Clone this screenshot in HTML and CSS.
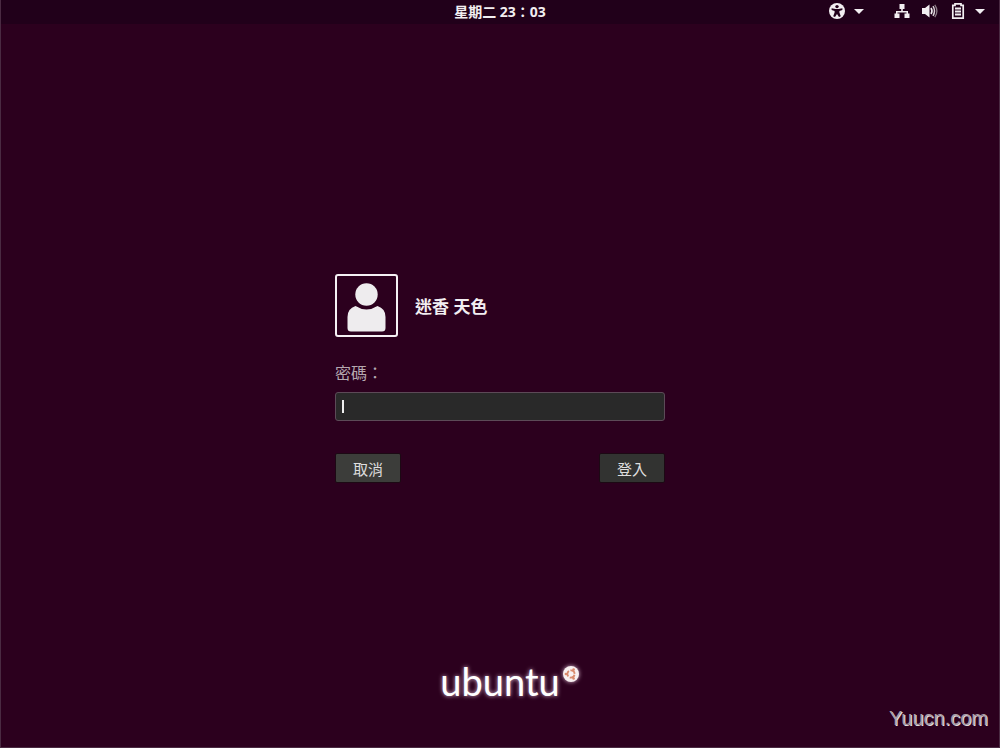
FILE: index.html
```html
<!DOCTYPE html>
<html lang="zh-Hant">
<head>
<meta charset="UTF-8">
<meta name="viewport" content="width=device-width, initial-scale=1.0">
<title>登入</title>
<link rel="stylesheet" href="styles.css">
</head>
<body>
<header class="topbar">
<time class="clock">星期二 23：03</time>
<div class="status">
<button class="menu" aria-label="無障礙">
<svg width="16" height="16" viewBox="0 0 16 16">
<circle cx="8" cy="8" r="8" fill="#f2eef1"/>
<circle cx="8" cy="3.6" r="1.7" fill="#21001a"/>
<path d="M2.6 5.2L6.4 6H9.6L13.4 5.2V7L10.4 8V9.6L11.8 13.2L10 14L8 11L6 14L4.2 13.2L5.6 9.6V8L2.6 7Z" fill="#21001a"/>
</svg>
<svg class="arrow" width="10" height="5" viewBox="0 0 10 5"><path d="M0 0H10L5 5Z"/></svg>
</button>
<button class="menu" aria-label="系統">
<svg width="16" height="16" viewBox="0 0 16 16" fill="#f2eef1">
<path d="M5.5 1H10.5V6H8.8V8H14V10.5H15.5V15H10.5V10.5H12.5V9.5H3.5V10.5H5.5V15H.5V10.5H2V8H7.2V6H5.5Z"/>
</svg>
<svg width="16" height="16" viewBox="0 0 16 16">
<path d="M0 5H3L7.5 1.5V14.5L3 11H0Z" fill="#f2eef1"/>
<path d="M9 5Q11 8 9 11" fill="none" stroke="#f2eef1" stroke-width="1.6"/>
<path d="M11 3.2Q14 8 11 12.8" fill="none" stroke="#d8cfd5" stroke-width="1.5"/>
<path d="M12.8 1.8Q17 8 12.8 14.2" fill="none" stroke="#8d7d88" stroke-width="1.3"/>
</svg>
<svg width="16" height="16" viewBox="0 0 16 16">
<path d="M5 2.3V.8H11V2.3H13.2V15.2H2.8V2.3Z" fill="none" stroke="#f2eef1" stroke-width="1.7"/>
<path d="M5 5.5H11M5 8.5H11M5 11.5H11" stroke="#f2eef1" stroke-width="1.8"/>
</svg>
<svg class="arrow" width="10" height="5" viewBox="0 0 10 5"><path d="M0 0H10L5 5Z"/></svg>
</button>
</div>
</header>

<main>
<form class="login" onsubmit="return false">
<div class="user">
<svg class="avatar" width="63" height="63" viewBox="0 0 63 63">
<rect x="1" y="1" width="61" height="61" rx="2" fill="none" stroke="#f5f0f4" stroke-width="2"/>
<circle cx="31.5" cy="20.5" r="11.2" fill="#eeecee"/>
<path d="M20.5 32Q31.5 39 42.5 32Q50.5 34.5 50.5 43V54Q50.5 57.5 47 57.5H16Q12.5 57.5 12.5 54V43Q12.5 34.5 20.5 32Z" fill="#eeecee"/>
</svg>
<span class="name">迷香 天色</span>
</div>
<label for="password">密碼：</label>
<div class="field">
<input type="password" id="password">
<span class="caret"></span>
</div>
<div class="buttons">
<button type="button" class="cancel">取消</button>
<button type="submit">登入</button>
</div>
</form>
</main>

<footer>
<div class="logo">
<span>ubuntu</span>
<svg width="18" height="18" viewBox="0 0 18 18">
<circle cx="9" cy="9" r="8" fill="#f8f0f0"/>
<circle cx="9" cy="9" r="3.6" fill="none" stroke="#d98a6c" stroke-width="1.8" stroke-dasharray="6 1.54" stroke-dashoffset="-.8"/>
<circle cx="3.9" cy="9" r="1.3" fill="#d98a6c"/>
<circle cx="11.6" cy="4.5" r="1.3" fill="#d98a6c"/>
<circle cx="11.6" cy="13.5" r="1.3" fill="#d98a6c"/>
</svg>
</div>
<span class="site">Yuucn.com</span>
</footer>
</body>
</html>
```
FILE: styles.css
```css
* {
box-sizing: border-box;
}

body {
margin: 0;
min-height: 100vh;
display: flex;
flex-direction: column;
background: #2c001e;
border: 1px solid #4a2a42;
border-top: none;
color: #f2eef1;
font-family: "Noto Sans", "Noto Sans CJK TC", sans-serif;
}

button {
font-family: inherit;
color: inherit;
cursor: pointer;
}

.topbar {
display: grid;
grid-template-columns: 1fr auto 1fr;
align-items: center;
height: 24px;
padding-right: 14px;
background: #21001a;
}

.clock {
grid-column: 2;
padding-left: 14px;
font-size: 14px;
line-height: 24px;
font-weight: bold;
}

.status {
display: flex;
justify-content: flex-end;
gap: 30px;
padding-bottom: 2px;
}

.menu {
display: flex;
align-items: center;
gap: 12px;
padding: 0;
border: none;
background: none;
}

.arrow {
margin-left: -3px;
fill: #f2eef1;
}

main {
flex: 1;
display: flex;
justify-content: center;
align-items: center;
padding: 80px 16px 0;
}

.login {
width: 330px;
}

.user {
display: flex;
align-items: center;
gap: 17px;
}

.name {
font-size: 17px;
font-weight: bold;
}

label {
display: block;
margin-top: 24px;
font-size: 16px;
line-height: 24px;
color: #b5a8b0;
}

.field {
position: relative;
margin-top: 7px;
}

input {
display: block;
width: 100%;
height: 29px;
padding: 0 6px;
background: #292929;
border: 1px solid #5c4a57;
border-radius: 3px;
color: #fff;
font-size: 15px;
outline: none;
}

.caret {
position: absolute;
left: 7px;
top: 8px;
width: 2px;
height: 13px;
background: #eee;
}

.buttons {
display: flex;
justify-content: space-between;
margin-top: 32px;
}

.buttons button {
width: 66px;
height: 30px;
padding: 0;
background: #323331;
border: 1px solid #1c0914;
border-radius: 2px;
color: #dedede;
font-size: 15px;
}

.buttons .cancel {
background: #3c3d3a;
}

footer {
display: grid;
grid-template-columns: 1fr auto 1fr;
height: 94px;
}

.logo {
grid-column: 2;
display: flex;
padding-left: 20px;
font-family: Lato, sans-serif;
font-size: 38px;
line-height: 56px;
color: #fff;
text-shadow: 0 0 4px #d9b8d0;
}

.logo svg {
margin: 12px 0 0 2px;
filter: drop-shadow(0 0 2px #d9b8d0);
}

.site {
align-self: end;
justify-self: end;
padding: 0 11px 17px 0;
font-family: "Liberation Sans", sans-serif;
font-size: 20px;
line-height: 24px;
color: #a89da5;
text-shadow: 1px 1px 0 #e0dade;
}
```
